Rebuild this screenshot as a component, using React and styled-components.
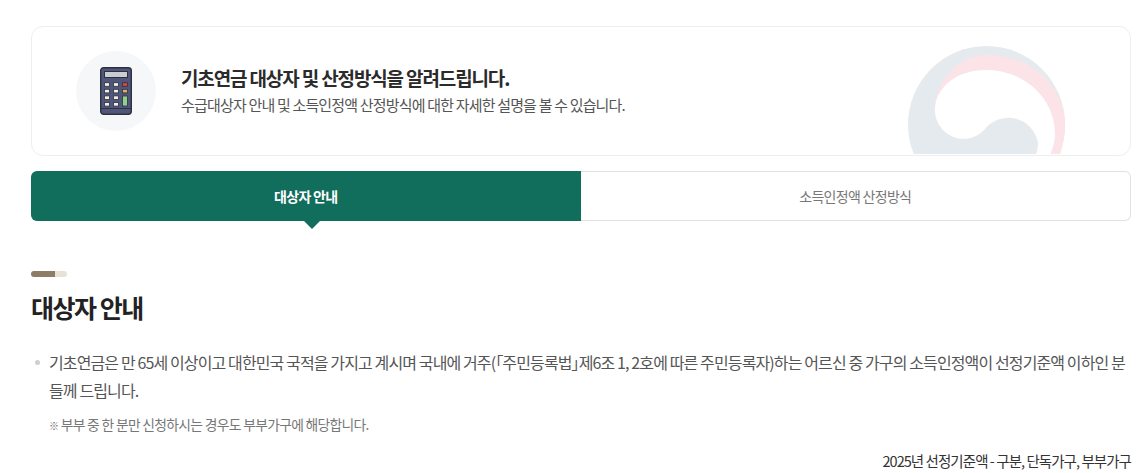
import styled, {createGlobalStyle} from "styled-components";

const GlobalStyle = createGlobalStyle`
  html, body {
    margin: 0;
    padding: 0;
    background: #fff;
    overflow: hidden;
  }

  body {
    font-family: "Noto Sans CJK KR", "Noto Sans", sans-serif;
    color: #222;
  }
`;

const Page = styled.div`
  box-sizing: border-box;
  width: 1146px;
  height: 473px;
  padding: 26px 15px 0 31px;
  overflow: hidden;
`;

const Banner = styled.section`
  position: relative;
  display: flex;
  align-items: center;
  gap: 25px;
  box-sizing: border-box;
  height: 130px;
  padding-left: 44px;
  border: 1px solid #eceef0;
  border-radius: 12px;
  overflow: hidden;
`;

const IconCircle = styled.div`
  display: flex;
  align-items: center;
  justify-content: center;
  width: 80px;
  height: 80px;
  border-radius: 50%;
  background: #f6f7f9;
`;

const BannerText = styled.div`
  padding-bottom: 3px;
`;

const BannerTitle = styled.h2`
  margin: 0 0 2px;
  font-size: 19px;
  line-height: 28px;
  font-weight: 700;
  letter-spacing: -0.06em;
  color: #2b2b2b;
`;

const BannerDesc = styled.p`
  margin: 0;
  font-size: 15px;
  line-height: 22px;
  letter-spacing: -0.055em;
  color: #555;
`;

const Emblem = styled.svg`
  position: absolute;
  left: 876px;
  top: 19px;
`;

const Tabs = styled.div`
  display: flex;
  margin-top: 15px;
`;

const Tab = styled.div`
  position: relative;
  display: flex;
  align-items: center;
  justify-content: center;
  box-sizing: border-box;
  flex: 1;
  height: 50px;
  font-size: 14px;
  letter-spacing: -0.05em;
  font-weight: ${(props) => (props.$active ? 700 : 400)};
  color: ${(props) => (props.$active ? "#fff" : "#777")};
  background: ${(props) => (props.$active ? "#116d5c" : "#fff")};
  border: ${(props) => (props.$active ? "none" : "1px solid #dfe1e4")};
  border-left: none;
  border-radius: ${(props) => (props.$active ? "6px 0 0 6px" : "0 6px 6px 0")};

  &::after {
    content: "";
    display: ${(props) => (props.$active ? "block" : "none")};
    position: absolute;
    left: 50%;
    bottom: -8px;
    margin-left: -2px;
    border-top: 8px solid #116d5c;
    border-left: 8px solid transparent;
    border-right: 8px solid transparent;
  }
`;

const SectionHead = styled.div`
  margin-top: 50px;
`;

const Accent = styled.div`
  width: 36px;
  height: 6px;
  border-radius: 3px;
  background: linear-gradient(to right, #8d7d66 0, #8d7d66 24px, #e8e1d6 24px);
`;

const SectionTitle = styled.h3`
  margin: 11px 0 0;
  font-size: 25px;
  line-height: 38px;
  font-weight: 700;
  letter-spacing: -0.06em;
  color: #222;
`;

const List = styled.ul`
  margin: 22px 0 0;
  padding: 0;
  list-style: none;
`;

const Item = styled.li`
  position: relative;
  padding-left: 18px;
  font-size: 16px;
  line-height: 28px;
  letter-spacing: -0.055em;
  color: #555;
  word-break: break-all;

  &::before {
    content: "";
    position: absolute;
    left: 4px;
    top: 12px;
    width: 5px;
    height: 5px;
    border-radius: 50%;
    background: #cdcfd2;
  }
`;

// full-width punctuation in Noto has a lot of blank space, keep it tight
const Tight = styled.span`
  font-feature-settings: "palt";
`;

const Note = styled.p`
  margin: 9px 0 0 18px;
  font-size: 13.8px;
  line-height: 22px;
  letter-spacing: -0.05em;
  color: #777;
`;

const NoteMark = styled.span`
  font-size: 10px;
  font-weight: 700;
  color: #666;
`;

const Caption = styled.p`
  margin: 13px 0 0;
  font-size: 14.5px;
  line-height: 22px;
  letter-spacing: -0.065em;
  text-align: right;
  color: #333;
`;

function CalculatorIcon() {
    const line = "#2e3040";
    return (
        <svg width="32" height="48" viewBox="0 0 32 48">
            <rect x="0.7" y="0.7" width="30.6" height="46.6" rx="3" fill="#50567a" stroke={line} strokeWidth="1.4"/>
            <path d="M1 41.5 H31" stroke={line} strokeWidth="1"/>
            <rect x="4.5" y="4.5" width="23" height="6" fill="#c9ccd0" stroke={line} strokeWidth="1"/>
            {[0, 1, 2, 3].map((row) => [0, 1].map((col) => (
                <rect key={`${row}-${col}`} x={4.5 + col * 9} y={15.7 + row * 6.6} width="5" height="3.6"
                      fill="#eeeee6" stroke={line} strokeWidth="0.8"/>
            )))}
            <rect x="22.5" y="15.7" width="5" height="3.6" fill="#d9483f" stroke={line} strokeWidth="0.8"/>
            <rect x="22.5" y="22.3" width="5" height="3.6" fill="#e0b060" stroke={line} strokeWidth="0.8"/>
            <rect x="22.5" y="29" width="5" height="10" fill="#8fd08f" stroke={line} strokeWidth="0.8"/>
        </svg>
    );
}

function EmblemMark() {
    return (
        <Emblem width="157" height="108" viewBox="0 0 157 108">
            <circle cx="78.5" cy="78.5" r="78.5" fill="#e5eaee"/>
            <path d="M27 55 C34 28 54 9 79 9 C112 9 138 26 149 48 C154 58 157 68 157 78 C157 90 155 100 151 112
                     L141 112 C145 102 147 96 147 88 C147 52 116 24 78 24 C48 24 27 42 27 64 Z"
                  fill="#fbe3e8"/>
            <path d="M27 64 A28.5 28.5 0 0 0 77 83 A30 30 0 0 1 130 97 Q130 104 127 112 L141 112
                     C145 102 147 96 147 88 C147 52 116 24 78 24 C48 24 27 42 27 64 Z"
                  fill="#fff"/>
        </Emblem>
    );
}

export default function App() {
    return (
        <>
            <GlobalStyle/>
            <Page>
                <Banner>
                    <IconCircle>
                        <CalculatorIcon/>
                    </IconCircle>
                    <BannerText>
                        <BannerTitle>기초연금 대상자 및 산정방식을 알려드립니다.</BannerTitle>
                        <BannerDesc>수급대상자 안내 및 소득인정액 산정방식에 대한 자세한 설명을 볼 수 있습니다.</BannerDesc>
                    </BannerText>
                    <EmblemMark/>
                </Banner>
                <Tabs>
                    <Tab $active>대상자 안내</Tab>
                    <Tab>소득인정액 산정방식</Tab>
                </Tabs>
                <SectionHead>
                    <Accent/>
                    <SectionTitle>대상자 안내</SectionTitle>
                </SectionHead>
                <List>
                    <Item>
                        기초연금은 만 65세 이상이고 대한민국 국적을 가지고 계시며 국내에 거주(<Tight>「</Tight>주민등록법<Tight>」</Tight>제6조 1, 2호에 따른 주민등록자)하는 어르신 중 가구의 소득인정액이 선정기준액 이하인 분들께 드립니다.
                    </Item>
                </List>
                <Note><NoteMark>※</NoteMark> 부부 중 한 분만 신청하시는 경우도 부부가구에 해당합니다.</Note>
                <Caption>2025년 선정기준액 - 구분, 단독가구, 부부가구</Caption>
            </Page>
        </>
    );
}
